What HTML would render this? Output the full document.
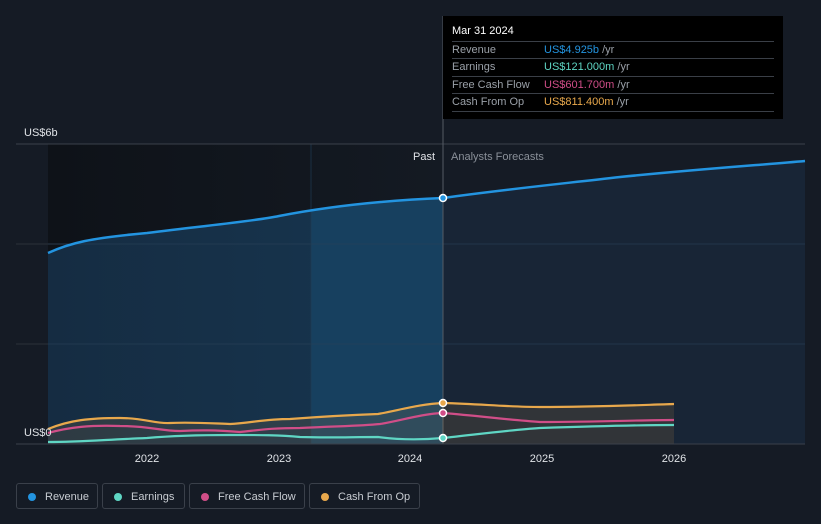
<!DOCTYPE html>
<html><head><style>
body{margin:0;background:#151b25;width:821px;height:524px;overflow:hidden;font-family:"Liberation Sans",sans-serif;}
.tt{position:absolute;left:443px;top:16px;width:340px;height:103px;background:#000;}
.tt .h{position:absolute;left:9px;top:9px;color:#fff;font-size:11px;}
.row{position:absolute;left:9px;width:322px;height:17px;border-top:1px solid #3a3f47;font-size:11px;line-height:17px;color:#9aa0a8;}
.row span{position:absolute;left:92px;}
.row i{font-style:normal;color:#9aa0a8;}
.leg{position:absolute;top:483px;height:26px;border:1px solid #3a404a;border-radius:3px;color:#c8ccd2;font-size:11px;line-height:26px;box-sizing:border-box;}
.leg b{position:absolute;left:11px;top:9px;width:8px;height:8px;border-radius:50%;}
.leg span{position:absolute;left:28px;}
</style></head><body>
<svg width="821" height="524" style="position:absolute;left:0;top:0">
<defs>
<linearGradient id="bg" x1="0" y1="0" x2="1" y2="0"><stop offset="0" stop-color="#0e1218"/><stop offset="1" stop-color="#141a23"/></linearGradient>
<linearGradient id="g" x1="0" y1="0" x2="1" y2="0"><stop offset="0" stop-color="#152c42"/><stop offset="1" stop-color="#173650"/></linearGradient>
<clipPath id="rc"><path d="M48,253 C70,243 90,238 147,233 C200,226 250,222 279,216 C320,208 370,201 443,198 L443,444 L48,444Z"/></clipPath>
</defs>
<rect x="48" y="144" width="395" height="300" fill="url(#bg)"/>
<line x1="16" y1="244" x2="805" y2="244" stroke="#2a3039"/>
<line x1="16" y1="344" x2="805" y2="344" stroke="#2a3039"/>
<path d="M48,253 C70,243 90,238 147,233 C200,226 250,222 279,216 C320,208 370,201 443,198 L443,444 L48,444Z" fill="url(#g)"/>
<rect x="311" y="144" width="132" height="300" fill="#17405f" clip-path="url(#rc)"/>
<path d="M443,198 C500,190 550,185 620,177 C700,169 760,165 805,161 L805,444 L443,444Z" fill="#182536"/>
<line x1="48" y1="244" x2="805" y2="244" stroke="#2a4158" stroke-opacity="0.6"/>
<line x1="48" y1="344" x2="805" y2="344" stroke="#2a4158" stroke-opacity="0.6"/>
<line x1="311" y1="144" x2="311" y2="444" stroke="#1f3a52" stroke-opacity="0.7"/>
<line x1="16" y1="144" x2="805" y2="144" stroke="#3a404a"/>
<line x1="443" y1="16" x2="443" y2="444" stroke="#555b64"/>
<path d="M48,253 C70,243 90,238 147,233 C200,226 250,222 279,216 C320,208 370,201 443,198 C500,190 550,185 620,177 C700,169 760,165 805,161" stroke="#2394e0" stroke-width="2.5" fill="none"/>
<path d="M48,429 C70,420 90,418 120,418 C145,418 155,424 170,423 C190,422 205,423 230,424 C250,423 265,419 290,419 C330,416 350,415 378,414 C400,410 420,404 443,403 C480,404 510,407 540,407 C600,407 640,405 674,404 L674,444 L48,444Z" fill="#e8a84c" opacity="0.12"/>
<path d="M48,429 C70,420 90,418 120,418 C145,418 155,424 170,423 C190,422 205,423 230,424 C250,423 265,419 290,419 C330,416 350,415 378,414 C400,410 420,404 443,403 C480,404 510,407 540,407 C600,407 640,405 674,404" stroke="#e8a84c" stroke-width="2.2" fill="none"/>
<path d="M48,433 C70,427 90,425 120,426 C150,426 160,431 180,431 C200,430 215,430 240,432 C260,430 270,428 300,428 C340,426 360,426 380,424 C400,421 420,414 443,413 C480,416 510,420 540,422 C600,422 640,420 674,420" stroke="#d04e88" stroke-width="2.2" fill="none"/>
<path d="M48,442 C80,442 100,440 147,438 C170,436 190,435 230,435 C260,435 280,435 300,437 C330,438 350,437 378,437 C400,440 420,440 443,438 C480,434 510,430 540,428 C600,426 640,425 674,425" stroke="#5fd6c4" stroke-width="2.2" fill="none"/>
<line x1="16" y1="444" x2="805" y2="444" stroke="#3a404a"/>
<g fill="#fff" stroke="#fff" stroke-width="1.5">
<circle cx="443" cy="198" r="3.5" fill="#2394e0"/>
<circle cx="443" cy="403" r="3.5" fill="#e8a84c"/>
<circle cx="443" cy="413" r="3.5" fill="#d04e88"/>
<circle cx="443" cy="438" r="3.5" fill="#5fd6c4"/>
</g>
<g font-family="Liberation Sans" font-size="11" fill="#e0e3e7" text-anchor="middle">
<text x="147" y="462">2022</text><text x="279" y="462">2023</text><text x="410" y="462">2024</text><text x="542" y="462">2025</text><text x="674" y="462">2026</text>
</g>
<text x="24" y="136" font-family="Liberation Sans" font-size="11" fill="#e0e3e7">US$6b</text>
<text x="24" y="436" font-family="Liberation Sans" font-size="11" fill="#e0e3e7">US$0</text>
<text x="435" y="160" font-family="Liberation Sans" font-size="11" fill="#e0e3e7" text-anchor="end">Past</text>
<text x="451" y="160" font-family="Liberation Sans" font-size="11" fill="#8a9099">Analysts Forecasts</text>
</svg>
<div class="tt"><div class="h">Mar 31 2024</div>
<div class="row" style="top:25px">Revenue<span><b style="color:#2394e0;font-weight:normal">US$4.925b</b> <i>/yr</i></span></div>
<div class="row" style="top:42px">Earnings<span><b style="color:#5fd6c4;font-weight:normal">US$121.000m</b> <i>/yr</i></span></div>
<div class="row" style="top:60px">Free Cash Flow<span><b style="color:#d04e88;font-weight:normal">US$601.700m</b> <i>/yr</i></span></div>
<div class="row" style="top:77px;border-bottom:1px solid #3a3f47">Cash From Op<span><b style="color:#e8a84c;font-weight:normal">US$811.400m</b> <i>/yr</i></span></div>
</div>
<div class="leg" style="left:16px;width:82px"><b style="background:#2394e0"></b><span>Revenue</span></div>
<div class="leg" style="left:102px;width:83px"><b style="background:#5fd6c4"></b><span>Earnings</span></div>
<div class="leg" style="left:189px;width:116px"><b style="background:#d04e88"></b><span>Free Cash Flow</span></div>
<div class="leg" style="left:309px;width:111px"><b style="background:#e8a84c"></b><span>Cash From Op</span></div>
</body></html>
